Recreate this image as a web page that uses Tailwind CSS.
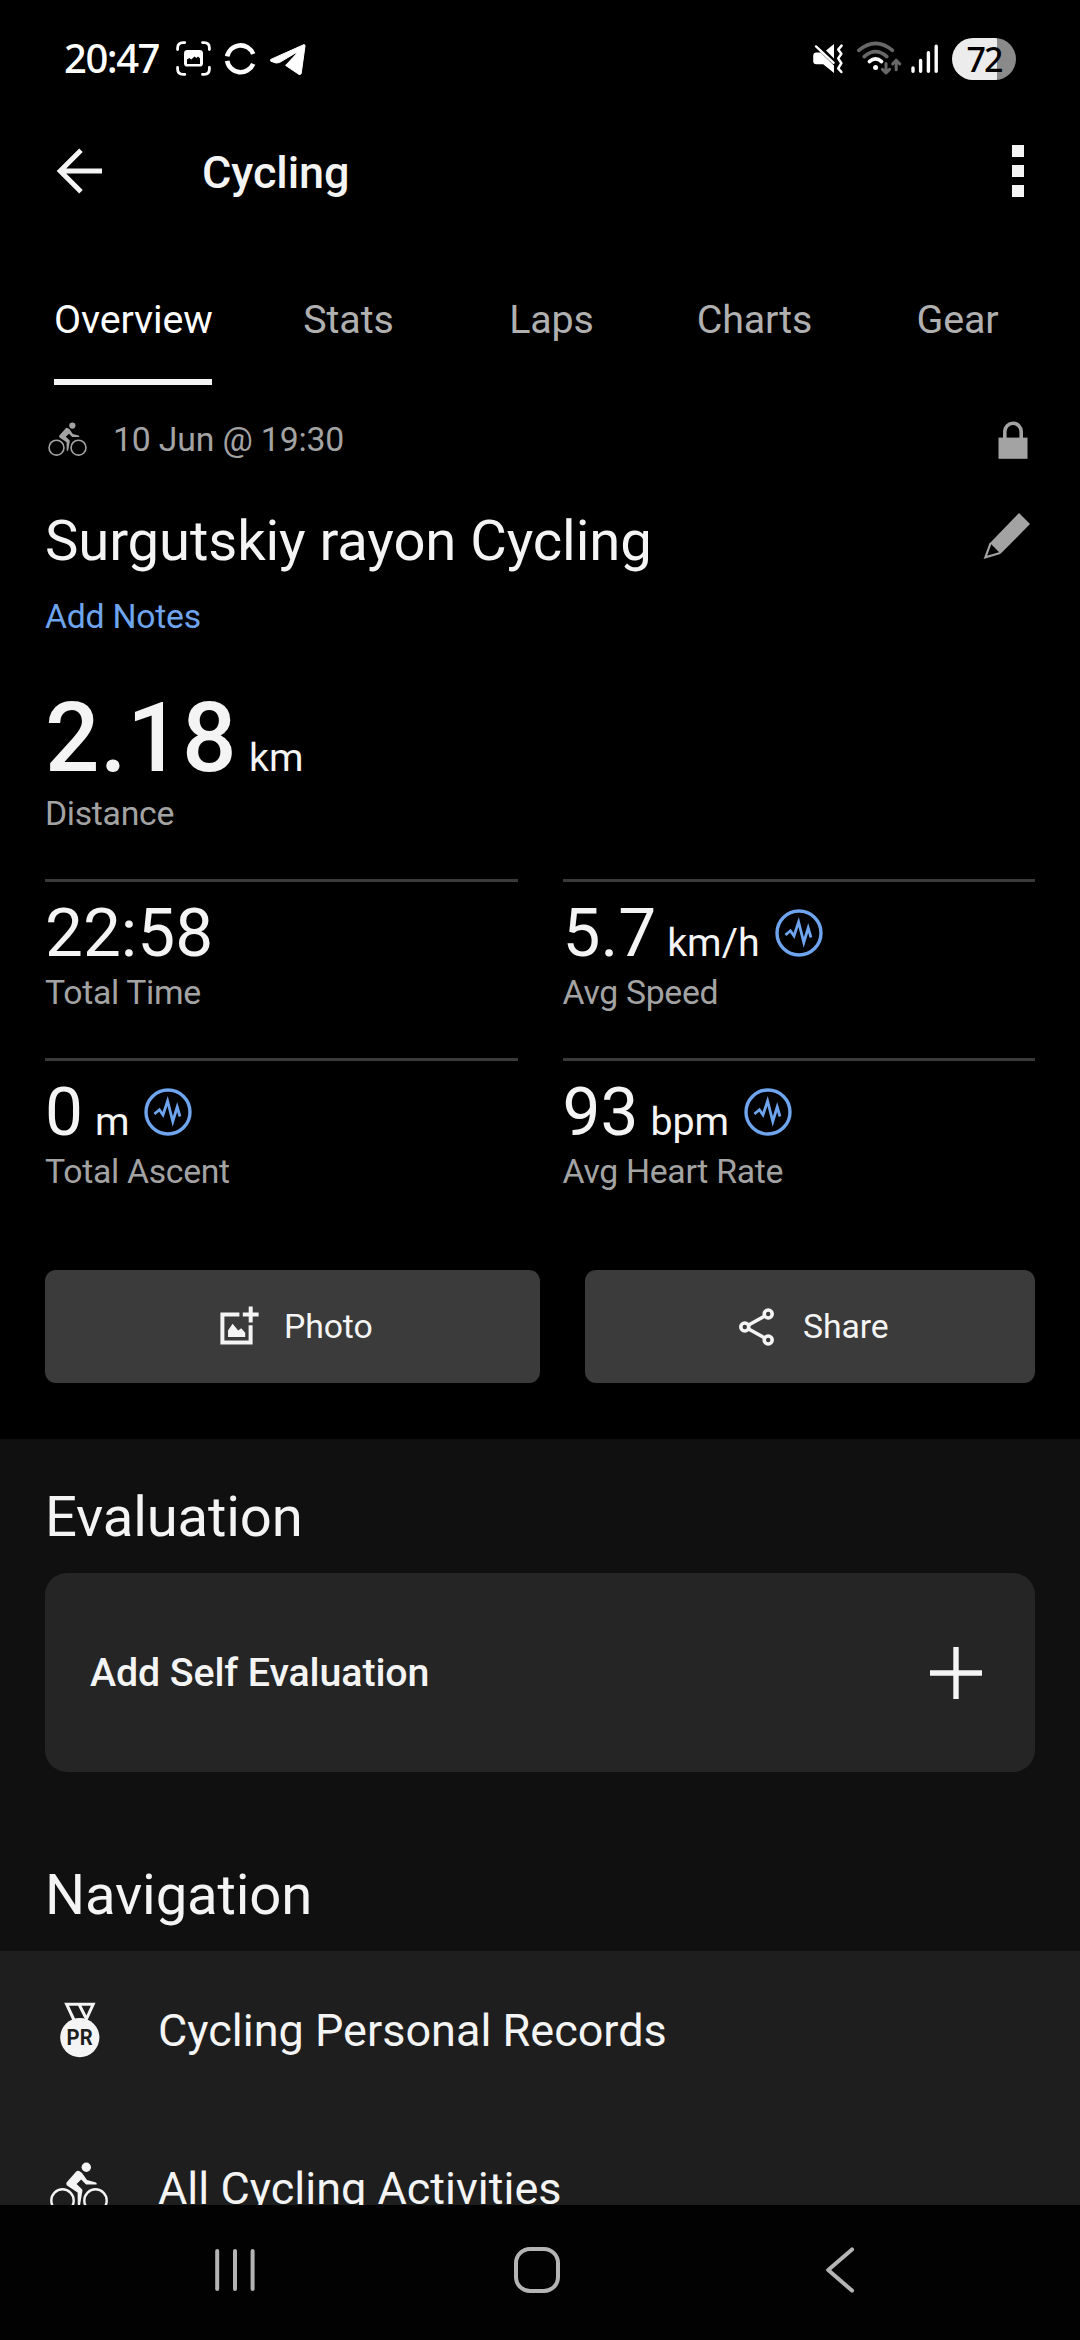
<!DOCTYPE html>
<html lang="en">
<head>
    <meta charset="UTF-8">
    <meta name="viewport" content="width=device-width, initial-scale=1.0">
    <title>Cycling Activity</title>
    <!-- Tailwind CSS -->
    <script src="https://cdn.jsdelivr.net/npm/@tailwindcss/browser@4"></script>
</head>
<body class="bg-black font-['Roboto',sans-serif] text-[#f4f4f4]">
    <!-- Shared icons -->
    <svg class="hidden">
        <symbol id="icon-bike" viewBox="0 0 58 51">
            <g fill="none" stroke="currentColor" stroke-width="2.4">
                <circle cx="12.5" cy="38.5" r="11.2"/>
                <circle cx="45.5" cy="38.5" r="11.2"/>
            </g>
            <circle cx="36.3" cy="5.3" r="4.7" fill="currentColor"/>
            <path fill="currentColor" d="M26.2 9.6Q27.9 8 30 9.4L32 11L37 18L46 20.4Q47.2 21.6 46.4 22.6L36 22.6L31.2 17.6L26.6 22L32 27.2Q32.6 28 32.4 29L30 43.2L27.8 43.2L27.6 30.4L17 23.4Q15.6 21.6 17 20Z"/>
        </symbol>
        <symbol id="icon-pulse" viewBox="0 0 48 48">
            <g fill="none" stroke="currentColor">
                <circle cx="24" cy="24" r="22" stroke-width="3.4"/>
                <path stroke-width="2.8" d="M10.4 26L15.4 21.8L19 27L23.6 13L28.8 33.5L33.2 19L36 28.5"/>
            </g>
        </symbol>
    </svg>

    <div class="flex h-[2340px] w-[1080px] flex-col overflow-hidden">
        <!-- Status Bar -->
        <div class="flex h-[116px] shrink-0 items-center justify-between pl-[64px] pr-[64px]">
            <div class="flex items-center">
                <span class="w-[112px] font-['Noto_Sans',sans-serif] text-[40px] font-medium leading-[40px] tracking-[-1.5px] text-white">20:47</span>
                <svg class="mt-[2px] h-[36px] w-[36px]" viewBox="0 0 36 36" fill="none">
                    <path stroke="#fff" stroke-width="2.8" stroke-linecap="round" d="M1.6 8.5V7Q1.6 1.6 7 1.6H8.8M26.5 1.6H28.2Q33.4 1.6 33.4 7V8.5M33.4 26.5V28Q33.4 33.4 28.2 33.4H26.5M8.8 33.4H7Q1.6 33.4 1.6 28V26.5"/>
                    <rect x="8" y="9" width="19" height="16.6" rx="3.4" fill="#fff"/>
                    <path fill="#000" d="M11 23V18.6L13.4 17L15.2 18.4L18.6 15.4L20.4 17L22 15.6L24 17.6V23Z"/>
                </svg>
                <svg class="ml-[12px] mt-[2px] h-[34px] w-[34px]" viewBox="0 0 34 34" fill="none" stroke="#fff" stroke-width="4.6">
                    <path d="M3.2 14.4A13.6 13.6 0 0 1 29.2 12M3.2 18.8A13.6 13.6 0 0 0 29.2 21.8"/>
                </svg>
                <svg class="ml-[12px] mt-[4px] h-[32px] w-[36px]" viewBox="0 0 36 32">
                    <path fill="#fff" stroke="#fff" stroke-linejoin="round" d="M.8 15.4L34 .6Q35 .6 35 2L31.2 29.6Q30.6 31 29 30.4L15.6 21.4L26.6 9.6Q26 8.6 24.8 9.4L9.4 18.6L6 19L.8 17.2Q0 16.2 .8 15.4Z"/>
                </svg>
            </div>
            <div class="flex items-center">
                <svg class="mt-[2px] h-[32px] w-[34px]" viewBox="0 0 34 32" fill="none">
                    <path fill="#fff" d="M1.2 13Q1.2 9.6 4.4 9.6H8.6L22 22.4V30L11.2 21.2H4.4Q1.2 21.2 1.2 18ZM14 7.6L22 1V15.6Z"/>
                    <path stroke="#fff" stroke-width="2.4" stroke-linecap="round" d="M4 3.4L21.6 19.8"/>
                    <path stroke="#fff" stroke-width="2.5" stroke-linecap="round" stroke-linejoin="round" d="M29.6 2.6L26.2 6.6L29.4 10.8L26.2 15.4L29.4 20.2L26.2 25.4L29.4 29"/>
                </svg>
                <svg class="ml-[9px] h-[36px] w-[50px]" viewBox="0 0 50 36" fill="none" stroke-linecap="round">
                    <g stroke="#686868" stroke-width="3.6">
                        <path d="M3.8 10.4Q20.6 -3.6 37.4 10.4M9.2 16.6Q20.6 6.6 31.8 16.6"/>
                        <path stroke-width="3" stroke-linejoin="round" d="M31 23.4V32.6M27.4 29.4L31 33L34.6 29.4M41.2 29.8V20.6M37.6 24L41.2 20.2L44.8 24"/>
                    </g>
                    <path stroke="#fff" stroke-width="3.6" d="M14.4 21.6Q20.6 16 26.6 21.6"/>
                    <circle cx="20.6" cy="27.4" r="2.5" fill="#fff"/>
                </svg>
                <svg class="ml-[5px] mt-[2px] h-[30px] w-[30px]" viewBox="0 0 30 30" stroke="#fff" stroke-width="3.4" stroke-linecap="round">
                    <path d="M3 24V27.2M10.6 16.4V27.2M18.4 8.8V27.2M26.2 2.2V27.2"/>
                </svg>
                <div class="ml-[12px] mt-[2px] flex h-[42px] w-[64px] items-center justify-center rounded-full bg-linear-to-r from-[#ececec] from-70% to-[#8a8a8a] to-70%">
                    <span class="font-['Noto_Sans',sans-serif] text-[34px] font-medium leading-[40px] tracking-[-2px] text-black">72</span>
                </div>
            </div>
        </div>

        <!-- App Bar -->
        <header class="flex h-[110px] shrink-0 items-center pl-[56px] pr-[56px]">
            <svg class="h-[46px] w-[47px]" viewBox="0 0 47 46" fill="none" stroke="#f4f4f4" stroke-width="5">
                <path d="M25 2.2L4.2 23L25 43.8M4.5 23H46"/>
            </svg>
            <h1 class="ml-[99px] flex-1 pt-[3px] text-[45px] font-medium leading-[52px] tracking-[-0.1px]">Cycling</h1>
            <div class="flex flex-col gap-2">
                <span class="size-3 bg-[#f4f4f4]"></span>
                <span class="size-3 bg-[#f4f4f4]"></span>
                <span class="size-3 bg-[#f4f4f4]"></span>
            </div>
        </header>

        <!-- Tabs -->
        <nav class="flex h-[159px] shrink-0 pl-[19px] pt-[74px] text-[39.375px] leading-[40px] tracking-[-0.1px] text-[#b0b0b0]">
            <div class="flex w-[228px] justify-center">
                <div class="w-[158px] border-b-6 border-[#f4f4f4] text-center text-white">Overview</div>
            </div>
            <div class="w-[203px] text-center">Stats</div>
            <div class="w-[203px] text-center">Laps</div>
            <div class="w-[203px] text-center">Charts</div>
            <div class="w-[203px] text-center">Gear</div>
        </nav>

        <main class="flex h-[1820px] shrink-0 flex-col overflow-hidden">
            <!-- Activity Summary -->
            <section class="h-[1054px] shrink-0 px-[45px] pt-[28px]">
                <div class="flex h-[54px] items-center text-[#a3a3a3]">
                    <svg class="ml-[3px] mb-[2px] h-[34px] w-[39px]"><use href="#icon-bike"/></svg>
                    <span class="ml-[26px] flex-1 text-[33.75px] leading-[40px] tracking-[-0.15px]">10 Jun @ 19:30</span>
                    <svg class="mb-[1px] mr-[7px] h-[38px] w-[30px]" viewBox="0 0 30 38">
                        <path fill="none" stroke="currentColor" stroke-width="3.6" d="M6.8 18V10.6A8.2 8.4 0 0 1 23.2 10.6V18"/>
                        <rect x=".5" y="16.6" width="29" height="21.2" fill="currentColor"/>
                    </svg>
                </div>
                <div class="mt-[41px] flex h-[66px] items-center justify-between">
                    <h2 class="text-[56.25px] leading-[66px] tracking-[-0.12px]">Surgutskiy rayon Cycling</h2>
                    <svg class="mb-[10px] mr-[4px] h-[48px] w-[48px] text-[#a3a3a3]" viewBox="0 0 48 48">
                        <path fill="currentColor" d="M36 1L47 12L17.6 41.8L7 31Z"/>
                        <path fill="none" stroke="currentColor" stroke-width="2.2" d="M7.6 31L2.4 45.4L17 41"/>
                    </svg>
                </div>
                <a class="mt-[23px] block text-[33.75px] leading-[40px] tracking-[-0.25px] text-[#6ea5ee]">Add Notes</a>

                <div class="mt-[45px] flex h-[112px] items-baseline">
                    <span class="text-[96px] font-medium leading-[112px] tracking-[0.4px]">2.18</span>
                    <span class="ml-[12px] text-[39.375px] leading-none">km</span>
                </div>
                <p class="text-[33.75px] leading-[40px] tracking-[-0.3px] text-[#a3a3a3]">Distance</p>

                <!-- Stats Grid -->
                <div class="mt-[45px] grid grid-cols-2 gap-x-[45px]">
                    <div class="h-[179px] border-t-3 border-[#3a3a3a] pt-[12px]">
                        <div class="flex h-[79px] items-baseline">
                            <span class="text-[67.5px] leading-[78px]">22:58</span>
                        </div>
                        <p class="text-[33.75px] leading-[40px] tracking-[-0.3px] text-[#a3a3a3]">Total Time</p>
                    </div>
                    <div class="h-[179px] border-t-3 border-[#3a3a3a] pt-[12px]">
                        <div class="flex h-[79px] items-baseline">
                            <span class="text-[67.5px] leading-[78px]">5.7</span>
                            <span class="ml-[11px] text-[39.375px] leading-none">km/h</span>
                            <svg class="mb-[2px] ml-[15px] size-[48px] self-center text-[#6ea5ee]"><use href="#icon-pulse"/></svg>
                        </div>
                        <p class="text-[33.75px] leading-[40px] tracking-[-0.3px] text-[#a3a3a3]">Avg Speed</p>
                    </div>
                    <div class="h-[179px] border-t-3 border-[#3a3a3a] pt-[12px]">
                        <div class="flex h-[79px] items-baseline">
                            <span class="text-[67.5px] leading-[78px]">0</span>
                            <span class="ml-[12px] text-[39.375px] leading-none">m</span>
                            <svg class="mb-[2px] ml-[15px] size-[48px] self-center text-[#6ea5ee]"><use href="#icon-pulse"/></svg>
                        </div>
                        <p class="text-[33.75px] leading-[40px] tracking-[-0.3px] text-[#a3a3a3]">Total Ascent</p>
                    </div>
                    <div class="h-[179px] border-t-3 border-[#3a3a3a] pt-[12px]">
                        <div class="flex h-[79px] items-baseline">
                            <span class="text-[67.5px] leading-[78px]">93</span>
                            <span class="ml-[12px] text-[39.375px] leading-none">bpm</span>
                            <svg class="mb-[2px] ml-[15px] size-[48px] self-center text-[#6ea5ee]"><use href="#icon-pulse"/></svg>
                        </div>
                        <p class="text-[33.75px] leading-[40px] tracking-[-0.3px] text-[#a3a3a3]">Avg Heart Rate</p>
                    </div>
                </div>

                <!-- Buttons -->
                <div class="mt-[33px] flex gap-[45px]">
                    <button class="flex h-[113px] w-[495px] items-center rounded-[11px] bg-[#3b3b3b] pl-[175px] text-[33.75px] leading-[40px]">
                        <svg class="mb-[2px] h-[40px] w-[40px]" viewBox="0 0 40 40" fill="none">
                            <path stroke="#f4f4f4" stroke-width="4" d="M19.4 8.4H2.4V36.6H30.6V19.2"/>
                            <path stroke="#f4f4f4" stroke-width="4" d="M22.8 8.6H38.6M30.7 .6V16.4"/>
                            <path fill="#f4f4f4" d="M8 31V24.4L12.6 17.8L18.2 24.6L21.2 22.2L25.2 26.8V31Z"/>
                        </svg>
                        <span class="ml-[24px] tracking-[-0.1px]">Photo</span>
                    </button>
                    <button class="flex h-[113px] w-[450px] items-center rounded-[11px] bg-[#3b3b3b] pl-[154px] text-[33.75px] leading-[40px]">
                        <svg class="h-[38px] w-[36px]" viewBox="0 0 36 38" fill="none" stroke="#f4f4f4" stroke-width="3.6">
                            <circle cx="5.8" cy="19" r="4"/>
                            <circle cx="29.2" cy="6" r="4"/>
                            <circle cx="29.2" cy="32" r="4"/>
                            <path d="M9.6 17L25.4 8.2M9.6 21L25.4 29.8"/>
                        </svg>
                        <span class="ml-[28px] tracking-[-0.1px]">Share</span>
                    </button>
                </div>
            </section>

            <!-- Evaluation -->
            <section class="flex-1 bg-[#101010] pt-[45px]">
                <h2 class="px-[45px] text-[56.25px] leading-[66px] tracking-[-0.15px]">Evaluation</h2>
                <div class="mx-[45px] mt-[23px] flex h-[199px] items-center justify-between rounded-[22px] bg-[#252525] pl-[45px] pr-[53px]">
                    <span class="text-[39.375px] font-medium leading-[46px] tracking-[-0.12px]">Add Self Evaluation</span>
                    <svg class="h-[52px] w-[52px]" viewBox="0 0 52 52" stroke="#f4f4f4" stroke-width="5.4">
                        <path d="M26 0V52M0 26H52"/>
                    </svg>
                </div>

                <!-- Navigation -->
                <h2 class="mt-[90px] px-[45px] text-[56.25px] leading-[66px] tracking-[-0.15px]">Navigation</h2>
                <div class="mt-[23px] bg-[#1e1e1e] text-[45px] leading-[54px]">
                    <div class="flex h-[158px] items-center pl-[60px]">
                        <svg class="h-[56px] w-[40px]" viewBox="0 0 40 56">
                            <path fill="none" stroke="#f4f4f4" stroke-width="3" d="M14 18L6.6 2.2H33.2L26 18M19 2.2L26 16"/>
                            <circle cx="19.8" cy="35.6" r="19.6" fill="#f4f4f4"/>
                            <text x="19.6" y="43.4" text-anchor="middle" font-family="Roboto, sans-serif" font-weight="700" font-size="22.5" textLength="26" lengthAdjust="spacingAndGlyphs" fill="#1e1e1e">PR</text>
                        </svg>
                        <span class="ml-[58px] pt-[2px]">Cycling Personal Records</span>
                    </div>
                    <div class="flex h-[158px] items-center pl-[50px]">
                        <svg class="mb-[2px] h-[51px] w-[58px]"><use href="#icon-bike"/></svg>
                        <span class="ml-[50px] pt-[2px]">All Cycling Activities</span>
                    </div>
                </div>
            </section>
        </main>

        <!-- System Navigation Bar -->
        <footer class="flex h-[135px] shrink-0 items-center bg-[#020202] pl-[214px] text-[#b4b4b4]">
            <svg class="mb-[5px] h-[46px] w-[42px]" viewBox="0 0 42 46" stroke="currentColor" stroke-width="4" stroke-linecap="round">
                <path d="M3.2 4V42M21 4V42M38.6 4V42"/>
            </svg>
            <svg class="mb-[5px] ml-[257px] h-[48px] w-[48px]" viewBox="0 0 48 48" fill="none" stroke="currentColor" stroke-width="4">
                <rect x="3" y="3" width="42" height="42" rx="14"/>
            </svg>
            <svg class="mb-[5px] ml-[264px] h-[48px] w-[30px]" viewBox="0 0 30 48" fill="none" stroke="currentColor" stroke-width="4" stroke-linecap="round" stroke-linejoin="round">
                <path d="M27 3.4L3.2 24L27 44.6"/>
            </svg>
        </footer>
    </div>
</body>
</html>
